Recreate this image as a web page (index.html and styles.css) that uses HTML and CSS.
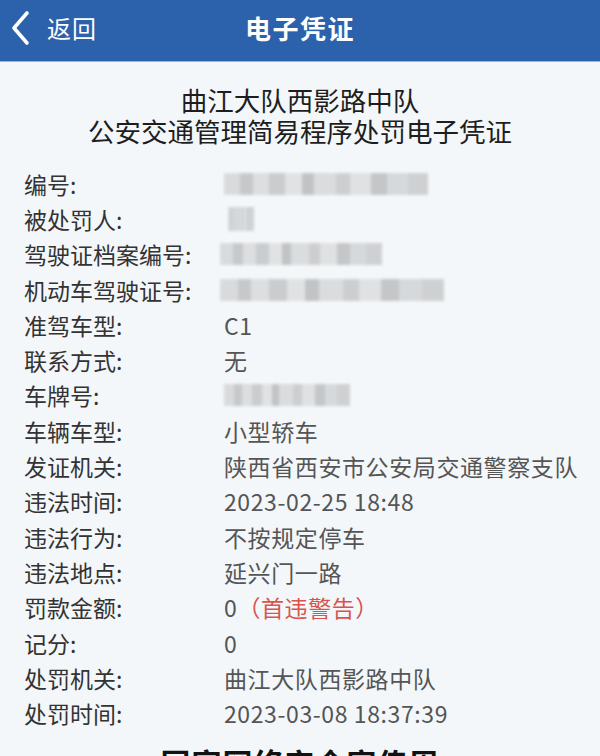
FILE: index.html
```html
<!DOCTYPE html>
<html lang="zh">
<head>
<meta charset="utf-8">
<title>电子凭证</title>
<link rel="stylesheet" href="styles.css">
</head>
<body>
<header class="nav">
  <div class="back">
    <svg class="chev" width="20" height="36" viewBox="0 0 20 36"><path d="M16 3 L3 18 L16 33" fill="none" stroke="#fff" stroke-width="3.6" stroke-linecap="round" stroke-linejoin="round"/></svg>
    <span class="back-txt">返回</span>
  </div>
  <div class="nav-title">电子凭证</div>
</header>
<main class="page">
  <div class="title">
    <div class="tline">曲江大队西影路中队</div>
    <div class="tline">公安交通管理简易程序处罚电子凭证</div>
  </div>
  <div class="rows">
    <div class="row"><span class="lab">编号:</span><span class="val"><span class="mask m1"></span></span></div>
    <div class="row"><span class="lab">被处罚人:</span><span class="val"><span class="mask m2"></span></span></div>
    <div class="row"><span class="lab">驾驶证档案编号:</span><span class="val"><span class="mask m3"></span></span></div>
    <div class="row"><span class="lab">机动车驾驶证号:</span><span class="val"><span class="mask m4"></span></span></div>
    <div class="row"><span class="lab">准驾车型:</span><span class="val">C1</span></div>
    <div class="row"><span class="lab">联系方式:</span><span class="val">无</span></div>
    <div class="row"><span class="lab">车牌号:</span><span class="val"><span class="mask m5"></span></span></div>
    <div class="row"><span class="lab">车辆车型:</span><span class="val">小型轿车</span></div>
    <div class="row"><span class="lab">发证机关:</span><span class="val">陕西省西安市公安局交通警察支队</span></div>
    <div class="row"><span class="lab">违法时间:</span><span class="val">2023-02-25 18:48</span></div>
    <div class="row"><span class="lab">违法行为:</span><span class="val">不按规定停车</span></div>
    <div class="row"><span class="lab">违法地点:</span><span class="val">延兴门一路</span></div>
    <div class="row"><span class="lab">罚款金额:</span><span class="val">0<span class="warn">（首违警告）</span></span></div>
    <div class="row"><span class="lab">记分:</span><span class="val">0</span></div>
    <div class="row"><span class="lab">处罚机关:</span><span class="val">曲江大队西影路中队</span></div>
    <div class="row"><span class="lab">处罚时间:</span><span class="val">2023-03-08 18:37:39</span></div>
  </div>
  <div class="foot">国家网络安全宣传周</div>
</main>
</body>
</html>
```
FILE: styles.css
```css
* { box-sizing: border-box; }
html, body { margin: 0; padding: 0; }
body {
  width: 600px;
  height: 756px;
  overflow: hidden;
  background: #f3f7f9;
  font-family: "Noto Sans CJK SC", "Noto Sans", sans-serif;
}
.nav {
  position: relative;
  height: 62px;
  background: #2b62ab;
  border-bottom: 1px solid #8fb6dc;
  display: flex;
  align-items: center;
  justify-content: center;
}
.back {
  position: absolute;
  left: 11px;
  top: 10px;
  display: flex;
  align-items: center;
  gap: 16px;
  color: #fff;
}
.chev { display: block; }
.back-txt {
  font-size: 24px;
  line-height: 36px;
  letter-spacing: 1px;
}
.nav-title {
  color: #fff;
  font-size: 26px;
  font-weight: 700;
  letter-spacing: 1.5px;
  margin-top: -6px;
}
.title {
  margin-top: 22px;
  text-align: center;
  color: #1e1e1e;
}
.tline {
  font-size: 26.5px;
  line-height: 31px;
  height: 31px;
}
.rows {
  margin-top: 20px;
  padding-left: 24px;
}
.row {
  display: flex;
  height: 35.3px;
  align-items: center;
  font-size: 23px;
}
.lab {
  width: 200px;
  color: #333;
}
.val {
  color: #555;
  display: flex;
  align-items: center;
  letter-spacing: 0.6px;
}
.warn { color: #d9534f; }
.mask {
  display: block;
  height: 22px;
  background:
    linear-gradient(90deg, #d4d6d8 0 8%, #bfc1c3 8% 14%, #d8dadc 14% 22%, #c3c5c7 22% 30%, #dddfe0 30% 38%, #b9bbbd 38% 44%, #d6d8da 44% 55%, #c6c8ca 55% 62%, #dcdedf 62% 72%, #bcbec0 72% 80%, #d2d4d6 80% 90%, #c8cacc 90% 100%);
  filter: blur(1.8px);
  opacity: 0.85;
}
.m1 { width: 204px; }
.m2 { width: 26px; height: 24px; margin-left: 4px; }
.m3 { width: 162px; margin-left: -4px; }
.m4 { width: 224px; margin-left: -4px; }
.m5 { width: 126px; }
.foot {
  margin-top: 13px;
  text-align: center;
  font-size: 30px;
  line-height: 36px;
  font-weight: 700;
  color: #111;
  letter-spacing: 1px;
}
```
